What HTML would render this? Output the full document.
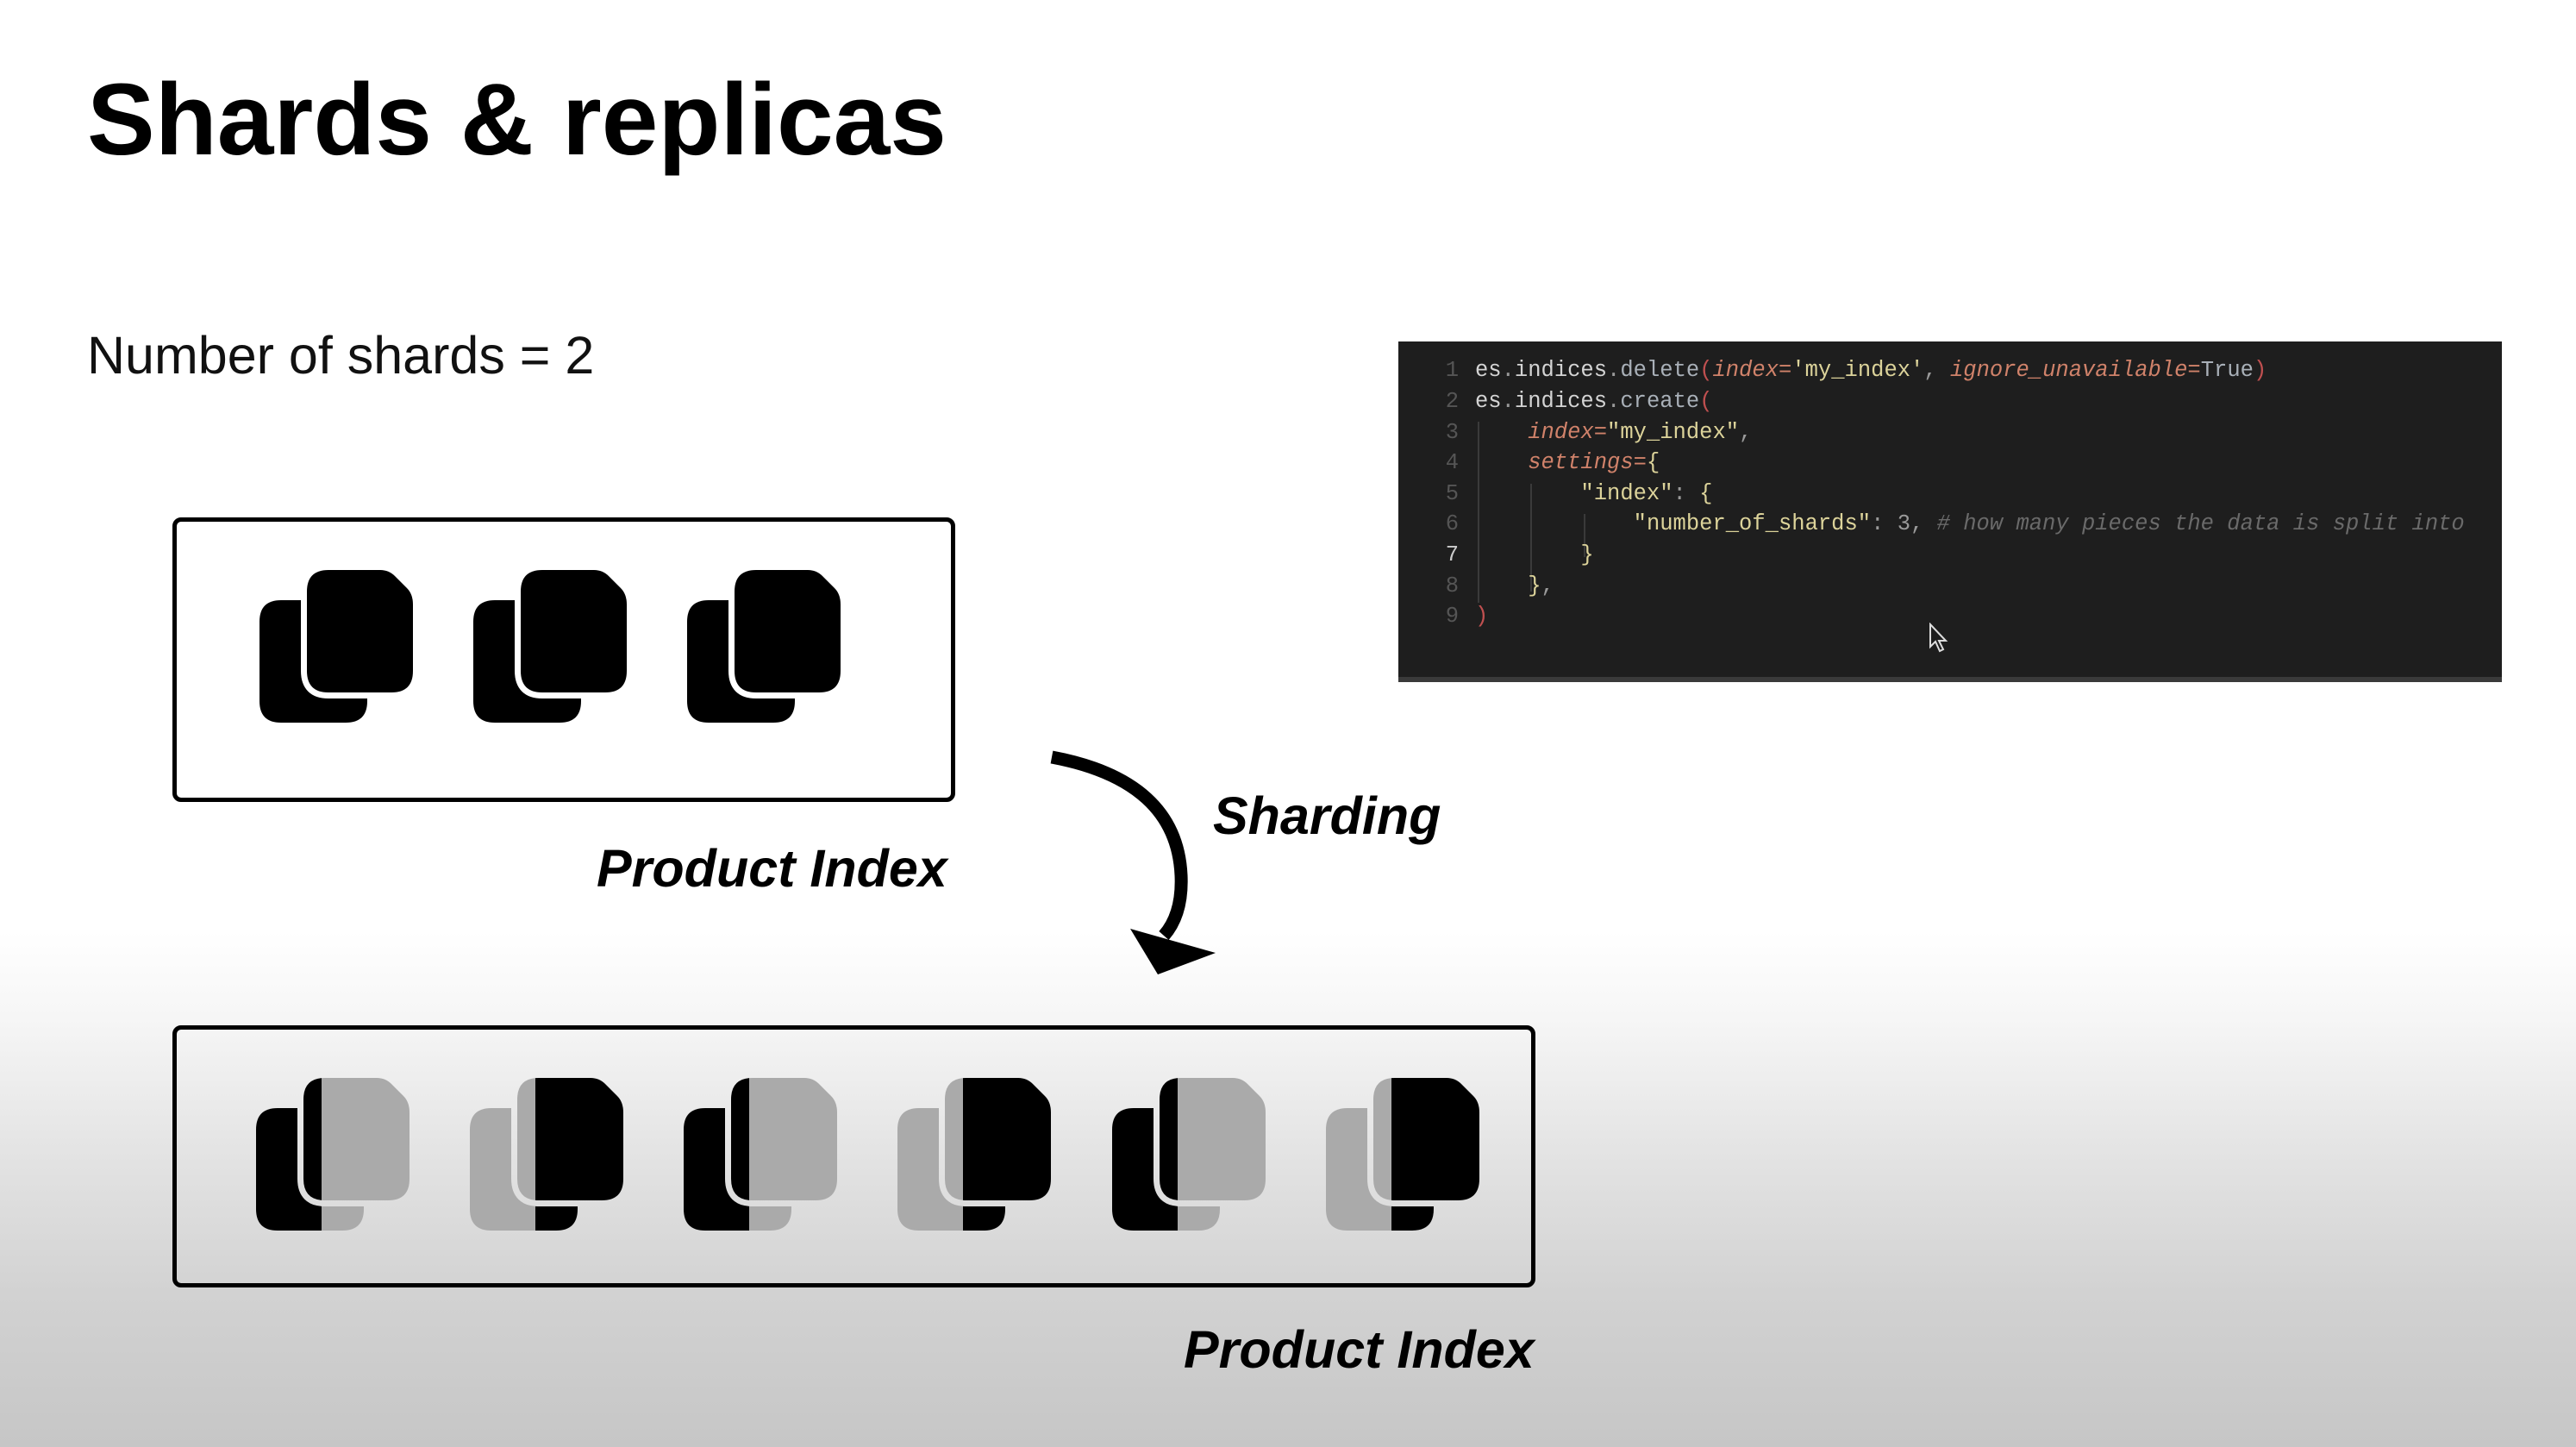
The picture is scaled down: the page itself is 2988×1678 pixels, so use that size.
<!DOCTYPE html>
<html><head><meta charset="utf-8"><style>
html,body{margin:0;padding:0}
body{width:2988px;height:1678px;position:relative;overflow:hidden;font-family:"Liberation Sans",sans-serif;
background:linear-gradient(to bottom,#fff 0px,#fff 1080px,#f6f6f6 1180px,#e2e2e2 1350px,#d2d2d2 1500px,#c6c6c6 1678px);}
.abs{position:absolute;white-space:nowrap}
h1{position:absolute;left:101px;top:80px;margin:0;font-size:118px;font-weight:bold;line-height:1;color:#000}
.box{position:absolute;border:5px solid #000;border-radius:10px;box-sizing:border-box}
.pi{font-weight:bold;font-style:italic;font-size:61px;color:#000}
.code{position:absolute;left:1622px;top:396px;width:1280px;height:395px;background:#1e1e1e;border-bottom:6px solid #3a3a3a;box-sizing:border-box;font-family:"Liberation Mono",monospace;font-size:25.5px}
.ln{position:absolute;left:40px;width:30px;text-align:right;color:#555}
.cl{position:absolute;left:89px;color:#d4d4d4;white-space:pre}
.k{color:#d0826a;font-style:italic}.s{color:#dcd39a}.m{color:#a9b0b8}.c{color:#6a6a6a;font-style:italic}.r{color:#c05050}.g{color:#9a9a9a}
.guide{position:absolute;width:2px;background:#3a3a3a}
</style></head><body>
<h1>Shards &amp; replicas</h1>
<div class="abs" style="left:101px;top:377px;font-size:61px;color:#111">Number of shards = 2</div>

<svg width="0" height="0" style="position:absolute">
<defs>
<path id="front" d="M80 0 H140 Q150 0 157 7 L171 21 Q178 28 178 40 V117 Q178 142 153 142 H80 Q55 142 55 117 V25 Q55 0 80 0 Z"/>
<path id="back" d="M25 35 H125 V152 Q125 177 100 177 H25 Q0 177 0 152 V60 Q0 35 25 35 Z"/>
<mask id="mk" maskUnits="userSpaceOnUse" x="0" y="0" width="180" height="180"><rect width="180" height="180" fill="#fff"/><use href="#front" fill="#000" stroke="#000" stroke-width="14"/></mask>
<clipPath id="cl"><rect x="0" y="0" width="76" height="180"/></clipPath>
<clipPath id="cr"><rect x="76" y="0" width="110" height="180"/></clipPath>
<g id="icon"><use href="#back" mask="url(#mk)"/><use href="#front"/></g>
</defs></svg>

<div class="box" style="left:200px;top:600px;width:908px;height:330px"></div>
<svg class="abs" style="left:301px;top:661px" width="180" height="180"><use href="#icon" fill="#000"/></svg>
<svg class="abs" style="left:549px;top:661px" width="180" height="180"><use href="#icon" fill="#000"/></svg>
<svg class="abs" style="left:797px;top:661px" width="180" height="180"><use href="#icon" fill="#000"/></svg>
<div class="abs pi" style="left:692px;top:972px">Product Index</div>

<svg class="abs" style="left:1200px;top:860px" width="240" height="290">
<path d="M20 18 Q165 45 170 155 Q172 200 150 225" fill="none" stroke="#000" stroke-width="15"/>
<polygon points="111,217 210,245 143,270" fill="#000"/>
</svg>
<div class="abs pi" style="left:1407px;top:911px">Sharding</div>

<div class="box" style="left:200px;top:1189px;width:1581px;height:304px"></div>
<svg class="abs" style="left:297px;top:1250px" width="180" height="180"><g clip-path="url(#cl)"><use href="#icon" fill="#000"/></g><g clip-path="url(#cr)"><use href="#icon" fill="#aaa"/></g></svg>
<svg class="abs" style="left:545px;top:1250px" width="180" height="180"><g clip-path="url(#cl)"><use href="#icon" fill="#aaa"/></g><g clip-path="url(#cr)"><use href="#icon" fill="#000"/></g></svg>
<svg class="abs" style="left:793px;top:1250px" width="180" height="180"><g clip-path="url(#cl)"><use href="#icon" fill="#000"/></g><g clip-path="url(#cr)"><use href="#icon" fill="#aaa"/></g></svg>
<svg class="abs" style="left:1041px;top:1250px" width="180" height="180"><g clip-path="url(#cl)"><use href="#icon" fill="#aaa"/></g><g clip-path="url(#cr)"><use href="#icon" fill="#000"/></g></svg>
<svg class="abs" style="left:1290px;top:1250px" width="180" height="180"><g clip-path="url(#cl)"><use href="#icon" fill="#000"/></g><g clip-path="url(#cr)"><use href="#icon" fill="#aaa"/></g></svg>
<svg class="abs" style="left:1538px;top:1250px" width="180" height="180"><g clip-path="url(#cl)"><use href="#icon" fill="#aaa"/></g><g clip-path="url(#cr)"><use href="#icon" fill="#000"/></g></svg>
<div class="abs pi" style="left:1373px;top:1530px">Product Index</div>

<div class="code">
<div class="guide" style="left:92px;top:93px;height:210px"></div>
<div class="guide" style="left:153px;top:165px;height:125px"></div>
<div class="guide" style="left:215px;top:200px;height:50px"></div>
<div class="ln" style="top:19px">1</div><div class="cl" style="top:19px">es<span class="g">.</span>indices<span class="g">.</span><span class="m">delete</span><span class="r">(</span><span class="k">index=</span><span class="s">'my_index'</span><span class="g">,</span> <span class="k">ignore_unavailable=</span><span class="m">True</span><span class="r">)</span></div>
<div class="ln" style="top:55px">2</div><div class="cl" style="top:55px">es<span class="g">.</span>indices<span class="g">.</span><span class="m">create</span><span class="r">(</span></div>
<div class="ln" style="top:91px">3</div><div class="cl" style="top:91px">    <span class="k">index=</span><span class="s">"my_index"</span><span class="g">,</span></div>
<div class="ln" style="top:126px">4</div><div class="cl" style="top:126px">    <span class="k">settings=</span><span class="s">{</span></div>
<div class="ln" style="top:162px">5</div><div class="cl" style="top:162px">        <span class="s">"index"</span><span class="g">:</span> <span class="s">{</span></div>
<div class="ln" style="top:197px">6</div><div class="cl" style="top:197px">            <span class="s">"number_of_shards"</span><span class="g">: 3,</span> <span class="c"># how many pieces the data is split into</span></div>
<div class="ln" style="top:233px;color:#ccc">7</div><div class="cl" style="top:233px">        <span class="s">}</span></div>
<div class="ln" style="top:269px">8</div><div class="cl" style="top:269px">    <span class="s">}</span><span class="g">,</span></div>
<div class="ln" style="top:304px">9</div><div class="cl" style="top:304px"><span class="r">)</span></div>
<svg style="position:absolute;left:615px;top:326px" width="24" height="36"><path d="M2 2 L2 28 L8 22 L13 33 L17 31 L12 21 L20 21 Z" fill="#1e1e1e" stroke="#ddd" stroke-width="2"/></svg>
</div>
</body></html>
